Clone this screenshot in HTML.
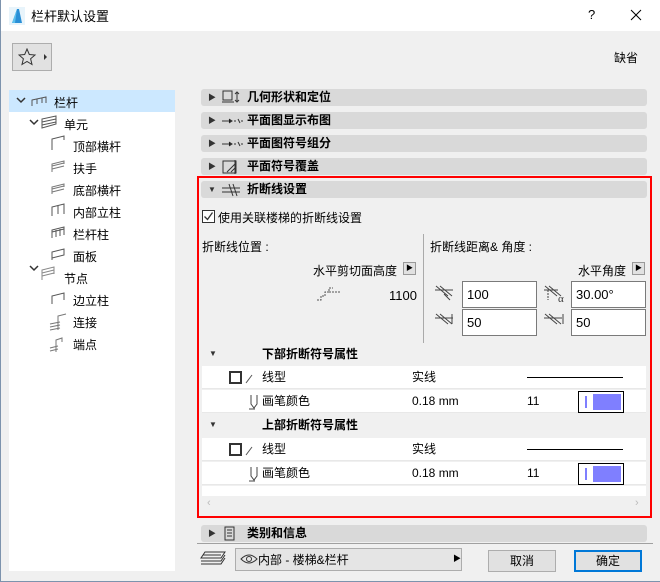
<!DOCTYPE html>
<html><head><meta charset="utf-8"><style>
*{margin:0;padding:0;box-sizing:border-box}
body{width:660px;height:582px;background:#f0f0f0;font-family:"Liberation Sans","Noto Sans CJK SC",sans-serif;font-size:12px;color:#000;position:relative;overflow:hidden}
.a{position:absolute;white-space:nowrap}
.hdr{position:absolute;left:201px;width:446px;height:17px;background:#d9d9d9;border-radius:3px;font-weight:bold;line-height:17px}
.hdr .t{position:absolute;left:7px;top:0;font-size:8px;color:#333}
.hdr .n{position:absolute;left:46px}
.hdr .i{position:absolute;left:20px;top:1px}
.tree .a{font-size:12px}
.row{position:absolute;left:202px;width:444px;height:23px;background:#fff;border-bottom:1px solid #e8e8e8;line-height:22px}
.sub{position:absolute;left:202px;width:444px;height:23px;background:#f0f0f0;line-height:22px;font-weight:bold}
.inp{position:absolute;background:#fff;border:1px solid #7a7a7a;height:27px;line-height:25px;padding-left:4px;font-size:13px}
.pen{position:absolute;width:46px;height:22px;border:1px solid #000;background:#fff}
.pen:before{content:"";position:absolute;left:6px;top:4px;width:2px;height:12px;background:#7f7fff}
.pen:after{content:"";position:absolute;left:14px;top:2px;width:28px;height:16px;background:#7f7fff}
</style></head><body>
<div class="a" style="left:0;top:0;width:660px;height:31px;background:#fff"></div>
<div class="a" style="left:0;top:0;width:1px;height:582px;background:#7d93ad"></div>
<div class="a" style="left:0;top:581px;width:660px;height:1px;background:#7d93ad"></div>
<svg class="a" style="left:9px;top:7px" width="16" height="18"><rect x="0" y="0" width="16" height="18" fill="#e8f4fb"/><path d="M3 16 L8 2 L10 2 L13 16 Z" fill="#2a8fd6"/><path d="M3 16 L8 2 L6 16Z" fill="#5cc0ee"/></svg>
<div class="a" style="left:31px;top:6px;font-size:13px">栏杆默认设置</div>
<div class="a" style="left:588px;top:7px;font-size:13px">?</div>
<svg class="a" style="left:630px;top:9px" width="12" height="12"><path d="M1 1L11 11M11 1L1 11" stroke="#000" stroke-width="1"/></svg>
<div class="a" style="left:12px;top:43px;width:40px;height:28px;border:1px solid #adadad;background:#e1e1e1"></div>
<svg class="a" style="left:18px;top:48px" width="30" height="18"><path d="M9 1 L11.3 6.5 L17 7 L12.6 10.8 L14 16.5 L9 13.5 L4 16.5 L5.4 10.8 L1 7 L6.7 6.5 Z" fill="none" stroke="#333"/><path d="M26 6 L29 9 L26 12Z" fill="#333"/></svg>
<div class="a" style="left:614px;top:49px">缺省</div>
<!-- tree -->
<div class="a" style="left:9px;top:90px;width:166px;height:481px;background:#fff"></div>
<div class="a" style="left:9px;top:90px;width:166px;height:22px;background:#cce8ff"></div>
<div class="a" style="left:183px;top:83px;width:470px;height:460px;background:#f0f0f0"></div>
<div class="tree">
<svg class="a" style="left:14px;top:92px" width="160" height="260" fill="none" stroke="#555">
<path d="M3 6l4 4 4-4" stroke="#333" stroke-width="1.5"/>
<path d="M18 14V8l14-3v6M18 8l14-3M23 12V7M28 11V6"/>
<path d="M16 28l4 4 4-4" stroke="#333" stroke-width="1.5"/>
<path d="M28 36V27l14-3v8l-14 4zM28 30l14-3M28 33l14-3"/>
<path d="M38 58V47l12-3v4"/>
<path d="M38 80V72l12-3v3M38 74l12-3M38 77l12-3" stroke="#777"/>
<path d="M38 102V95l12-3v3M38 97l12-3M38 100l12-3" stroke="#777"/>
<path d="M38 124V115l12-3v10M44 122V114"/>
<path d="M38 146V138l12-3v8M38 140l12-3M42 145V138M46 144V137"/>
<path d="M38 168V160l12-3v6l-12 3z"/>
<path d="M16 174l4 4 4-4" stroke="#333" stroke-width="1.5"/>
<path d="M28 188V178l12-3v7M28 181l12-3M28 184l12-3" stroke="#888"/>
<path d="M38 212V204l12-3v7"/>
<path d="M36 232l10-2M36 235l10-2M36 238l10-2M44 238V224l8-2" stroke="#777"/>
<path d="M36 256l8-2M36 259l8-2M42 260V248l6-2v4" stroke="#777"/>
</svg>
<div class="a" style="left:54px;top:94px">栏杆</div>
<div class="a" style="left:64px;top:116px">单元</div>
<div class="a" style="left:73px;top:138px">顶部横杆</div>
<div class="a" style="left:73px;top:160px">扶手</div>
<div class="a" style="left:73px;top:182px">底部横杆</div>
<div class="a" style="left:73px;top:204px">内部立柱</div>
<div class="a" style="left:73px;top:226px">栏杆柱</div>
<div class="a" style="left:73px;top:248px">面板</div>
<div class="a" style="left:64px;top:270px">节点</div>
<div class="a" style="left:73px;top:292px">边立柱</div>
<div class="a" style="left:73px;top:314px">连接</div>
<div class="a" style="left:73px;top:336px">端点</div>
</div>
<!-- headers -->
<div class="hdr" style="top:89px"><span class="t">▶</span><svg class="i" width="22" height="15" fill="none" stroke="#333"><rect x="2" y="1" width="9" height="9"/><path d="M1 12h12M16 2v10M14 4l2-2 2 2M14 10l2 2 2-2"/></svg><span class="n">几何形状和定位</span></div>
<div class="hdr" style="top:112px"><span class="t">▶</span><svg class="i" width="22" height="15" stroke="#333"><path d="M1 8h9M8 6l3 2-3 2M13 8h2M17 6l2 4M20 8h2"/></svg><span class="n">平面图显示布图</span></div>
<div class="hdr" style="top:135px"><span class="t">▶</span><svg class="i" width="22" height="15" stroke="#333"><path d="M1 8h9M8 6l3 2-3 2M13 8h2M17 6l2 4M20 8h2"/></svg><span class="n">平面图符号组分</span></div>
<div class="hdr" style="top:158px"><span class="t">▶</span><svg class="i" width="22" height="15" fill="none" stroke="#333"><rect x="2" y="2" width="13" height="12"/><path d="M6 13l8-8M10 13l4-4M14 1v14"/></svg><span class="n">平面符号覆盖</span></div>
<div class="a" style="left:197px;top:176px;width:455px;height:342px;border:2px solid #f00"></div>
<div class="hdr" style="top:181px"><span class="t">▼</span><svg class="i" width="22" height="15" fill="none" stroke="#333"><path d="M1 6h18M1 10h18M8 2l4 12M12 2l4 12"/></svg><span class="n">折断线设置</span></div>
<svg class="a" style="left:202px;top:210px" width="13" height="13"><rect x=".5" y=".5" width="12" height="12" fill="#fff" stroke="#333"/><path d="M2.5 6.5l3 3 5-7" fill="none" stroke="#333" stroke-width="1.3"/></svg>
<div class="a" style="left:218px;top:209px">使用关联楼梯的折断线设置</div>
<div class="a" style="left:202px;top:238px">折断线位置 :</div>
<div class="a" style="left:423px;top:234px;width:1px;height:126px;background:#aaa"></div>
<div class="a" style="left:430px;top:238px">折断线距离&amp; 角度 :</div>
<div class="a" style="left:313px;top:262px">水平剪切面高度</div>
<div class="a" style="left:403px;top:262px;width:13px;height:13px;border:1px solid #999;background:#e1e1e1;font-size:7px;line-height:11px;text-align:center">▶</div>
<div class="a" style="left:578px;top:262px">水平角度</div>
<div class="a" style="left:632px;top:262px;width:13px;height:13px;border:1px solid #999;background:#e1e1e1;font-size:7px;line-height:11px;text-align:center">▶</div>
<svg class="a" style="left:316px;top:286px" width="28" height="16" fill="none" stroke="#555" stroke-dasharray="2 1"><path d="M1 14h4v-4h4v-4h4v-4h4M13 6h12"/></svg>
<div class="a" style="left:389px;top:288px;font-size:13px">1100</div>
<svg class="a" style="left:434px;top:284px" width="24" height="50" fill="none" stroke="#444"><path d="M2 2l12 10M6 2l12 10M1 6h18M10 10l6 6"/><path d="M2 30l12 10M6 30l12 10M1 34h18M18 30v10" /></svg>
<div class="inp" style="left:462px;top:281px;width:75px">100</div>
<div class="inp" style="left:462px;top:309px;width:75px">50</div>
<svg class="a" style="left:543px;top:284px" width="26" height="50" fill="none" stroke="#444"><path d="M2 2l12 10M6 2l12 10M1 6h14" /><path d="M5 6v10" stroke-dasharray="2 1"/><text x="15" y="18" font-size="11" fill="#333" stroke="none" font-family="Liberation Serif">α</text><path d="M2 30l12 10M6 30l12 10M1 34h18M20 30v10"/></svg>
<div class="inp" style="left:571px;top:281px;width:75px">30.00°</div>
<div class="inp" style="left:571px;top:309px;width:75px">50</div>
<!-- table -->
<div class="sub" style="top:343px"><span class="a" style="left:7px;font-size:8px;font-weight:normal;color:#333">▼</span><span class="a" style="left:60px">下部折断符号属性</span></div>
<div class="row" style="top:366px"><svg class="a" style="left:27px;top:5px" width="30" height="13"><rect x="1" y="1" width="11" height="11" fill="none" stroke="#333" stroke-width="2"/><path d="M17 12l6-8" stroke="#555"/></svg><span class="a" style="left:60px">线型</span><span class="a" style="left:210px">实线</span><span class="a" style="left:325px;top:11px;width:96px;height:1px;background:#000"></span></div>
<div class="row" style="top:390px"><svg class="a" style="left:46px;top:4px" width="12" height="16" fill="none" stroke="#444"><path d="M3 1v9l3 4 3-4V1M1 15h6"/></svg><span class="a" style="left:60px">画笔颜色</span><span class="a" style="left:210px">0.18 mm</span><span class="a" style="left:325px">11</span><div class="pen" style="left:376px;top:1px"></div></div>
<div class="sub" style="top:414px"><span class="a" style="left:7px;font-size:8px;font-weight:normal;color:#333">▼</span><span class="a" style="left:60px">上部折断符号属性</span></div>
<div class="row" style="top:438px"><svg class="a" style="left:27px;top:5px" width="30" height="13"><rect x="1" y="1" width="11" height="11" fill="none" stroke="#333" stroke-width="2"/><path d="M17 12l6-8" stroke="#555"/></svg><span class="a" style="left:60px">线型</span><span class="a" style="left:210px">实线</span><span class="a" style="left:325px;top:11px;width:96px;height:1px;background:#000"></span></div>
<div class="row" style="top:462px"><svg class="a" style="left:46px;top:4px" width="12" height="16" fill="none" stroke="#444"><path d="M3 1v9l3 4 3-4V1M1 15h6"/></svg><span class="a" style="left:60px">画笔颜色</span><span class="a" style="left:210px">0.18 mm</span><span class="a" style="left:325px">11</span><div class="pen" style="left:376px;top:1px"></div></div>
<div class="a" style="left:202px;top:486px;width:444px;height:10px;background:#fff"></div>
<div class="a" style="left:207px;top:497px;color:#bbb;font-size:11px">‹</div>
<div class="a" style="left:635px;top:497px;color:#bbb;font-size:11px">›</div>
<div class="hdr" style="top:525px"><span class="t">▶</span><svg class="i" width="22" height="15" fill="none" stroke="#333"><rect x="4" y="1" width="9" height="13"/><path d="M6 4h5M6 7h5M6 10h5"/></svg><span class="n">类别和信息</span></div>
<div class="a" style="left:197px;top:543px;width:456px;height:1px;background:#a0a0a0"></div>
<svg class="a" style="left:199px;top:550px" width="28" height="18" fill="none" stroke="#333"><path d="M6 2h20l-4 6H2zM2 11h20l4-6M2 14h20l4-6M4 5h18M4 8h18"/></svg>
<div class="a" style="left:235px;top:548px;width:227px;height:23px;border:1px solid #adadad;background:#e5e5e5"></div>
<svg class="a" style="left:240px;top:553px" width="18" height="12" fill="none" stroke="#333"><path d="M1 6q8-8 16 0q-8 8-16 0z"/><circle cx="9" cy="6" r="2.5"/></svg>
<div class="a" style="left:258px;top:551px">内部 - 楼梯&amp;栏杆</div>
<div class="a" style="left:453px;top:553px;font-size:8px">▶</div>
<div class="a" style="left:488px;top:550px;width:68px;height:22px;border:1px solid #adadad;background:#e1e1e1;text-align:center;line-height:20px">取消</div>
<div class="a" style="left:574px;top:550px;width:68px;height:22px;border:2px solid #0078d7;background:#e1e1e1;text-align:center;line-height:18px">确定</div>
</body></html>
